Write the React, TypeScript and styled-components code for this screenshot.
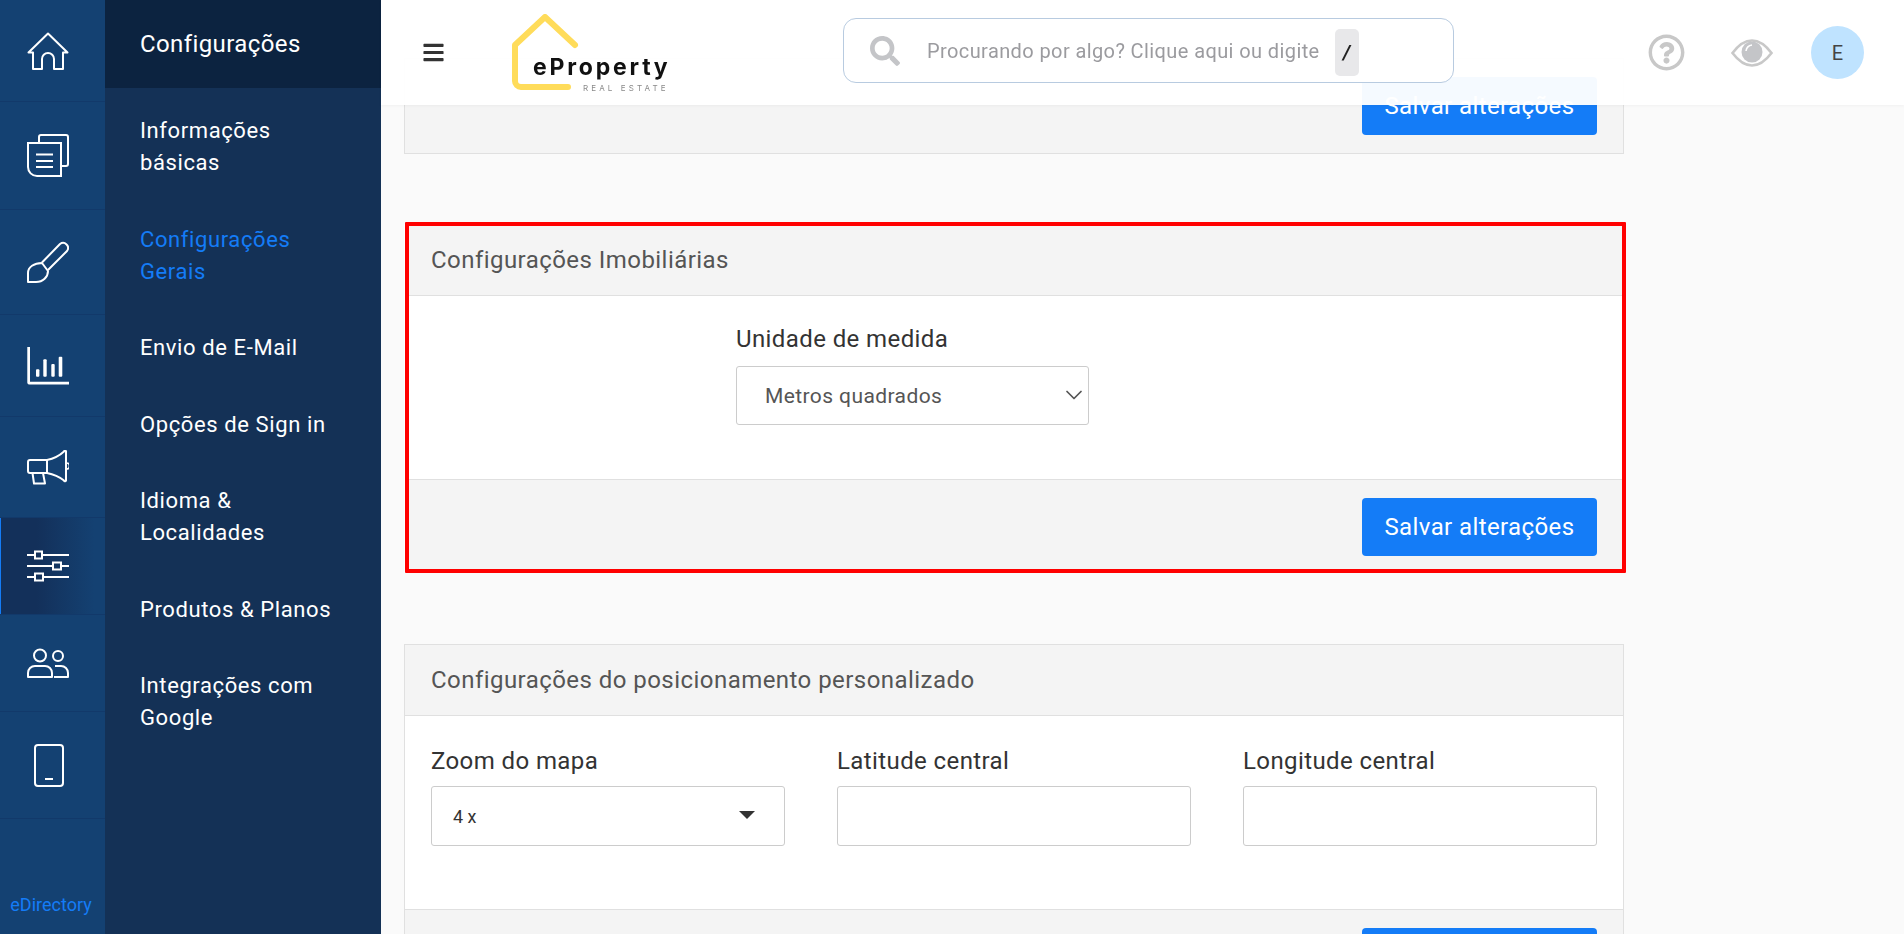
import React from "react";
import styled, { createGlobalStyle } from "styled-components";
import { FaBars, FaSearch, FaRegQuestionCircle } from "react-icons/fa";
import { ChevronDown } from "lucide-react";

const GlobalStyle = createGlobalStyle`
  html, body {
    margin: 0;
    height: 100%;
    overflow: hidden;
    background: #fafafa;
    font-family: Roboto, "Liberation Sans", sans-serif;
  }
  * { box-sizing: border-box; }
`;

const railItems = [
  {
    height: 102,
    icon: (
      <svg width="42" height="38" viewBox="0 0 42 38" fill="none" stroke="#fff" strokeWidth="2">
        <path d="M21 1.5 L40.5 20.5 H36 V37 H27 V27 a6 6 0 0 0 -12 0 V37 H6 V20.5 H1.5 Z" strokeLinejoin="round" />
      </svg>
    ),
  },
  {
    height: 108,
    icon: (
      <svg width="42" height="43" viewBox="0 0 42 43" fill="none" stroke="#fff" strokeWidth="2">
        <path d="M1 9 H34 V42 H10 a9 9 0 0 1 -9 -9 Z" />
        <path d="M12 9 V3 a2 2 0 0 1 2 -2 H39 a2 2 0 0 1 2 2 V30 a2 2 0 0 1 -2 2 H34" />
        <path d="M9 20.5 H26 M9 27 H26 M9 33 H26" />
      </svg>
    ),
  },
  {
    height: 105,
    icon: (
      <svg width="42" height="42" viewBox="0 0 42 42" fill="none" stroke="#fff" strokeWidth="2">
        <path d="M15 21.5 L33 3 a5 5 0 0 1 7 7 L21 29" strokeLinejoin="round" />
        <path d="M1 41 V32 C1 26 7 22 15 22 L21 30 C21 36 16 41 9 41 Z" strokeLinejoin="round" />
      </svg>
    ),
  },
  {
    height: 102,
    icon: (
      <svg width="42" height="38" viewBox="0 0 42 38" fill="#fff">
        <path d="M0.3 0 H3 V34.7 H42 V37.5 H2 a2 2 0 0 1 -1.7 -1.7 Z" />
        <rect x="9" y="22.3" width="3.4" height="7.4" rx="1" />
        <rect x="16.3" y="12.3" width="3.4" height="17.4" rx="1" />
        <rect x="24.3" y="17" width="3.4" height="12.7" rx="1" />
        <rect x="31.7" y="9.7" width="3.6" height="20" rx="1" />
      </svg>
    ),
  },
  {
    height: 101,
    icon: (
      <svg width="42" height="35" viewBox="0 0 42 35" fill="none" stroke="#fff" strokeWidth="2" strokeLinejoin="round">
        <path d="M3 10 H20 V23 H3 a2 2 0 0 1 -2 -2 V12 a2 2 0 0 1 2 -2 Z" />
        <path d="M20 10 Q30 8 37 1.5 a1 1 0 0 1 2 0.5 V30 a1 1 0 0 1 -2 0.5 Q30 25 20 23" />
        <path d="M5.5 23 L7 33.5 H18 L16 23" />
        <path d="M39.5 13 a3 3 0 0 1 0 6" strokeWidth="1.6" />
      </svg>
    ),
  },
  {
    height: 97,
    active: true,
    icon: (
      <svg width="42" height="32" viewBox="0 0 42 32" fill="none" stroke="#fff" strokeWidth="2">
        <path d="M0 5 H8 M15 5 H42 M0 16 H26 M34 16 H42 M0 27 H8 M16 27 H42" />
        <rect x="8" y="1.5" width="7" height="7" />
        <rect x="26" y="12.5" width="8" height="7" />
        <rect x="8" y="23.5" width="8" height="7" />
      </svg>
    ),
  },
  {
    height: 97,
    icon: (
      <svg width="42" height="30" viewBox="0 0 42 30" fill="none" stroke="#fff" strokeWidth="2">
        <circle cx="13" cy="7.5" r="6" />
        <path d="M1 29 V25 a7 7 0 0 1 7 -7 H18 a7 7 0 0 1 7 7 V29 Z" strokeLinejoin="round" />
        <circle cx="31" cy="8" r="5" />
        <path d="M28 18 H34 a7 7 0 0 1 7 7 V29 H27" strokeLinejoin="round" />
      </svg>
    ),
  },
  {
    height: 107,
    icon: (
      <svg width="32" height="43" viewBox="-2 0 32 43" fill="none" stroke="#fff" strokeWidth="2">
        <rect x="1" y="1" width="28" height="41" rx="3" />
        <path d="M11 35 H19" />
      </svg>
    ),
  },
];

const menuItems = [
  { label: "Informações básicas" },
  { label: "Configurações Gerais", active: true },
  { label: "Envio de E-Mail" },
  { label: "Opções de Sign in" },
  { label: "Idioma & Localidades" },
  { label: "Produtos & Planos" },
  { label: "Integrações com Google" },
];

const App = () => {
  return (
    <Page>
      <GlobalStyle />
      <Rail>
        {railItems.map((item, i) => (
          <RailItem key={i} $height={item.height} $active={item.active}>
            {item.icon}
          </RailItem>
        ))}
        <RailBrand>eDirectory</RailBrand>
      </Rail>
      <Sidebar>
        <SidebarTitle>Configurações</SidebarTitle>
        <Menu>
          {menuItems.map((item) => (
            <MenuItem key={item.label} $active={item.active}>
              {item.label}
            </MenuItem>
          ))}
        </Menu>
      </Sidebar>
      <Main>
        <Header>
          <MenuButton>
            <FaBars size={23} />
          </MenuButton>
          <Logo>
            <LogoHouse width="68" height="78" viewBox="0 0 68 78" fill="none">
              <path
                d="M56 73 H9 a6 6 0 0 1 -6 -6 V31 L33 3 L63 31"
                stroke="#ffdc5a"
                strokeWidth="6"
                strokeLinecap="round"
                strokeLinejoin="round"
              />
            </LogoHouse>
            <LogoName>eProperty</LogoName>
            <LogoTag>REAL ESTATE</LogoTag>
          </Logo>
          <Search>
            <FaSearch size={30} color="#c4c5c8" />
            <SearchText>Procurando por algo? Clique aqui ou digite</SearchText>
            <SearchKey>/</SearchKey>
          </Search>
          <HeaderRight>
            <FaRegQuestionCircle size={37} color="#c8c8c8" />
            <svg width="42" height="28" viewBox="0 0 42 28" fill="none">
              <path d="M1.5 14 C9 4 15 1.5 21 1.5 S33 4 40.5 14 C33 24 27 26.5 21 26.5 S9 24 1.5 14 Z" stroke="#c8c8c8" strokeWidth="2.6" />
              <circle cx="21" cy="13" r="10.5" fill="#c4c5c8" />
              <path d="M15 12 a7 7 0 0 1 6 -6" stroke="#fff" strokeWidth="1.6" />
            </svg>
            <Avatar>E</Avatar>
          </HeaderRight>
        </Header>

        <ClippedCard>
          <CardFooter>
            <SaveButton>Salvar alterações</SaveButton>
          </CardFooter>
        </ClippedCard>

        <Card $highlight>
          <CardHeader>Configurações Imobiliárias</CardHeader>
          <UnitBody>
            <Field>
              <FieldLabel>Unidade de medida</FieldLabel>
              <SelectWrap>
                <NativeSelect defaultValue="m2">
                  <option value="m2">Metros quadrados</option>
                  <option value="ft2">Pés quadrados</option>
                </NativeSelect>
                <SelectChevron>
                  <ChevronDown size={28} strokeWidth={1.5} />
                </SelectChevron>
              </SelectWrap>
            </Field>
          </UnitBody>
          <CardFooter $short>
            <SaveButton>Salvar alterações</SaveButton>
          </CardFooter>
        </Card>

        <Card>
          <CardHeader>Configurações do posicionamento personalizado</CardHeader>
          <MapBody>
            <Field>
              <FieldLabel>Zoom do mapa</FieldLabel>
              <ZoomSelect>
                4 x
                <Caret />
              </ZoomSelect>
            </Field>
            <Field>
              <FieldLabel>Latitude central</FieldLabel>
              <TextInput />
            </Field>
            <Field>
              <FieldLabel>Longitude central</FieldLabel>
              <TextInput />
            </Field>
          </MapBody>
          <CardFooter>
            <SaveButton>Salvar alterações</SaveButton>
          </CardFooter>
        </Card>
      </Main>
    </Page>
  );
};

export default App;

const Page = styled.div`
  display: flex;
  height: 934px;
  overflow: hidden;
`;

const Rail = styled.nav`
  width: 105px;
  flex: none;
  display: flex;
  flex-direction: column;
  background: #144172;
`;

const RailItem = styled.div<{ $height: number; $active?: boolean }>`
  height: ${(p) => p.$height}px;
  flex: none;
  padding-right: 9px;
  display: flex;
  align-items: center;
  justify-content: center;
  border-bottom: 1px solid #12396a;
  ${(p) =>
    p.$active &&
    `
    background: linear-gradient(90deg, #13305a 0%, #13305a 35%, #144172 90%);
    box-shadow: inset 1px 0 0 #147cf7;
  `}
`;

const RailBrand = styled.div`
  margin-top: auto;
  padding: 0 3px 19px 0;
  text-align: center;
  font-size: 18px;
  color: #147cf7;
`;

const Sidebar = styled.aside`
  width: 276px;
  flex: none;
  background: #143156;
  color: #fff;
`;

const SidebarTitle = styled.div`
  height: 88px;
  padding-left: 35px;
  display: flex;
  align-items: center;
  background: #0c2340;
  font-size: 24px;
  letter-spacing: 0.4px;
`;

const Menu = styled.ul`
  list-style: none;
  margin: 0;
  padding: 27px 35px 0;
  display: flex;
  flex-direction: column;
  gap: 44.5px;
`;

const MenuItem = styled.li<{ $active?: boolean }>`
  font-size: 22px;
  line-height: 32px;
  letter-spacing: 0.6px;
  color: ${(p) => (p.$active ? "#147cf7" : "#fff")};
`;

const Main = styled.main`
  flex: 1;
  min-width: 0;
  padding: 58px 0 0 23px;
  display: flex;
  flex-direction: column;
  gap: 70px;
`;

const Header = styled.header`
  position: fixed;
  top: 0;
  left: 381px;
  right: 0;
  height: 105px;
  z-index: 10;
  display: flex;
  align-items: center;
  padding: 0 40px 0 41px;
  background: rgba(255, 255, 255, 0.96);
  box-shadow: 0 1px 3px rgba(0, 0, 0, 0.04);
`;

const MenuButton = styled.div`
  display: flex;
  color: #333;
`;

const Logo = styled.div`
  position: relative;
  width: 170px;
  height: 78px;
  margin: 0 0 0 67px;
  padding: 41px 0 0 21px;
  filter: blur(0.4px);
`;

const LogoHouse = styled.svg`
  position: absolute;
  top: 0;
  left: 0;
`;

const LogoName = styled.div`
  font-family: Inter, sans-serif;
  font-size: 23px;
  font-weight: 700;
  line-height: 24px;
  letter-spacing: 2.8px;
  color: #111;
`;

const LogoTag = styled.div`
  margin: 4px 0 0 50px;
  font-family: Inter, sans-serif;
  font-size: 8px;
  line-height: 10px;
  letter-spacing: 3.1px;
  white-space: nowrap;
  color: #8a8a8a;
`;

const Search = styled.div`
  width: 611px;
  height: 65px;
  margin: 0 0 4px 161px;
  padding: 0 0 0 26px;
  display: flex;
  align-items: center;
  border: 1px solid #b8cbe0;
  border-radius: 13px;
  background: #fff;
`;

const SearchText = styled.span`
  margin-left: 27px;
  font-size: 20px;
  letter-spacing: 0.4px;
  white-space: nowrap;
  color: #9b9b9f;
`;

const SearchKey = styled.span`
  width: 24px;
  height: 47px;
  margin: 3px 0 0 15px;
  display: flex;
  align-items: center;
  justify-content: center;
  border-radius: 5px;
  background: #e8e8ea;
  font-size: 20px;
  font-weight: 700;
  font-style: italic;
  color: #222;
`;

const HeaderRight = styled.div`
  margin-left: auto;
  display: flex;
  align-items: center;
  gap: 46px;
`;

const Avatar = styled.div`
  width: 53px;
  height: 53px;
  margin-left: -8px;
  display: flex;
  align-items: center;
  justify-content: center;
  border-radius: 50%;
  background: #bfe3ff;
  font-size: 20px;
  color: #444;
`;

const Card = styled.section<{ $highlight?: boolean }>`
  position: relative;
  width: 1220px;
  flex: none;
  border: 1px solid #e0e0e0;
  background: #fff;
  ${(p) =>
    p.$highlight &&
    `
    margin-bottom: 1px;
    border: none;
    padding: 1px;
    &::after {
      content: "";
      position: absolute;
      top: -2px;
      left: 1px;
      right: -2px;
      bottom: 0;
      border: 4px solid #f00;
      border-radius: 1px;
      pointer-events: none;
    }
  `}
`;

const ClippedCard = styled(Card)`
  border-top: none;
`;

const CardHeader = styled.div`
  height: 71px;
  padding-left: 26px;
  display: flex;
  align-items: center;
  background: #f4f4f4;
  border-bottom: 1px solid #e0e0e0;
  font-size: 24px;
  letter-spacing: 0.45px;
  color: #555;
`;

const CardFooter = styled.div<{ $short?: boolean }>`
  padding: 18px 26px ${(p) => (p.$short ? 16 : 18)}px;
  display: flex;
  justify-content: flex-end;
  background: #f4f4f4;
  border-top: 1px solid #e0e0e0;
`;

const SaveButton = styled.button`
  width: 235px;
  height: 58px;
  padding: 0;
  border: none;
  border-radius: 4px;
  background: #147cf7;
  color: #fff;
  font-family: inherit;
  font-size: 24px;
  letter-spacing: 0.4px;
`;

const UnitBody = styled.div`
  height: 183px;
  padding: 28px 0 0 331px;
  display: grid;
  grid-template-columns: 353px;
`;

const MapBody = styled.div`
  height: 193px;
  padding: 30px 26px 0;
  display: grid;
  grid-template-columns: repeat(3, 1fr);
  column-gap: 52px;
`;

const Field = styled.div`
  display: flex;
  flex-direction: column;
`;

const FieldLabel = styled.label`
  height: 40px;
  font-size: 24px;
  line-height: 30px;
  letter-spacing: 0.4px;
  color: #333;
`;

const SelectWrap = styled.div`
  position: relative;
  height: 59px;
  margin-top: 2px;
`;

const NativeSelect = styled.select`
  width: 100%;
  height: 100%;
  padding-left: 28px;
  appearance: none;
  border: 1px solid #ccc;
  border-radius: 3px;
  background: #fff;
  font-family: inherit;
  font-size: 21px;
  letter-spacing: 0.4px;
  color: #555;
`;

const SelectChevron = styled.span`
  position: absolute;
  top: 15px;
  right: 1px;
  display: flex;
  color: #555;
  pointer-events: none;
`;

const ZoomSelect = styled.div`
  height: 60px;
  padding: 0 29px 0 21px;
  display: flex;
  align-items: center;
  justify-content: space-between;
  border: 1px solid #ccc;
  border-radius: 3px;
  background: #fff;
  font-size: 18px;
  color: #333;
`;

const Caret = styled.span`
  width: 0;
  height: 0;
  margin-bottom: 2px;
  border-left: 8px solid transparent;
  border-right: 8px solid transparent;
  border-top: 8px solid #333;
`;

const TextInput = styled.input`
  height: 60px;
  border: 1px solid #ccc;
  border-radius: 3px;
  background: #fff;
`;
